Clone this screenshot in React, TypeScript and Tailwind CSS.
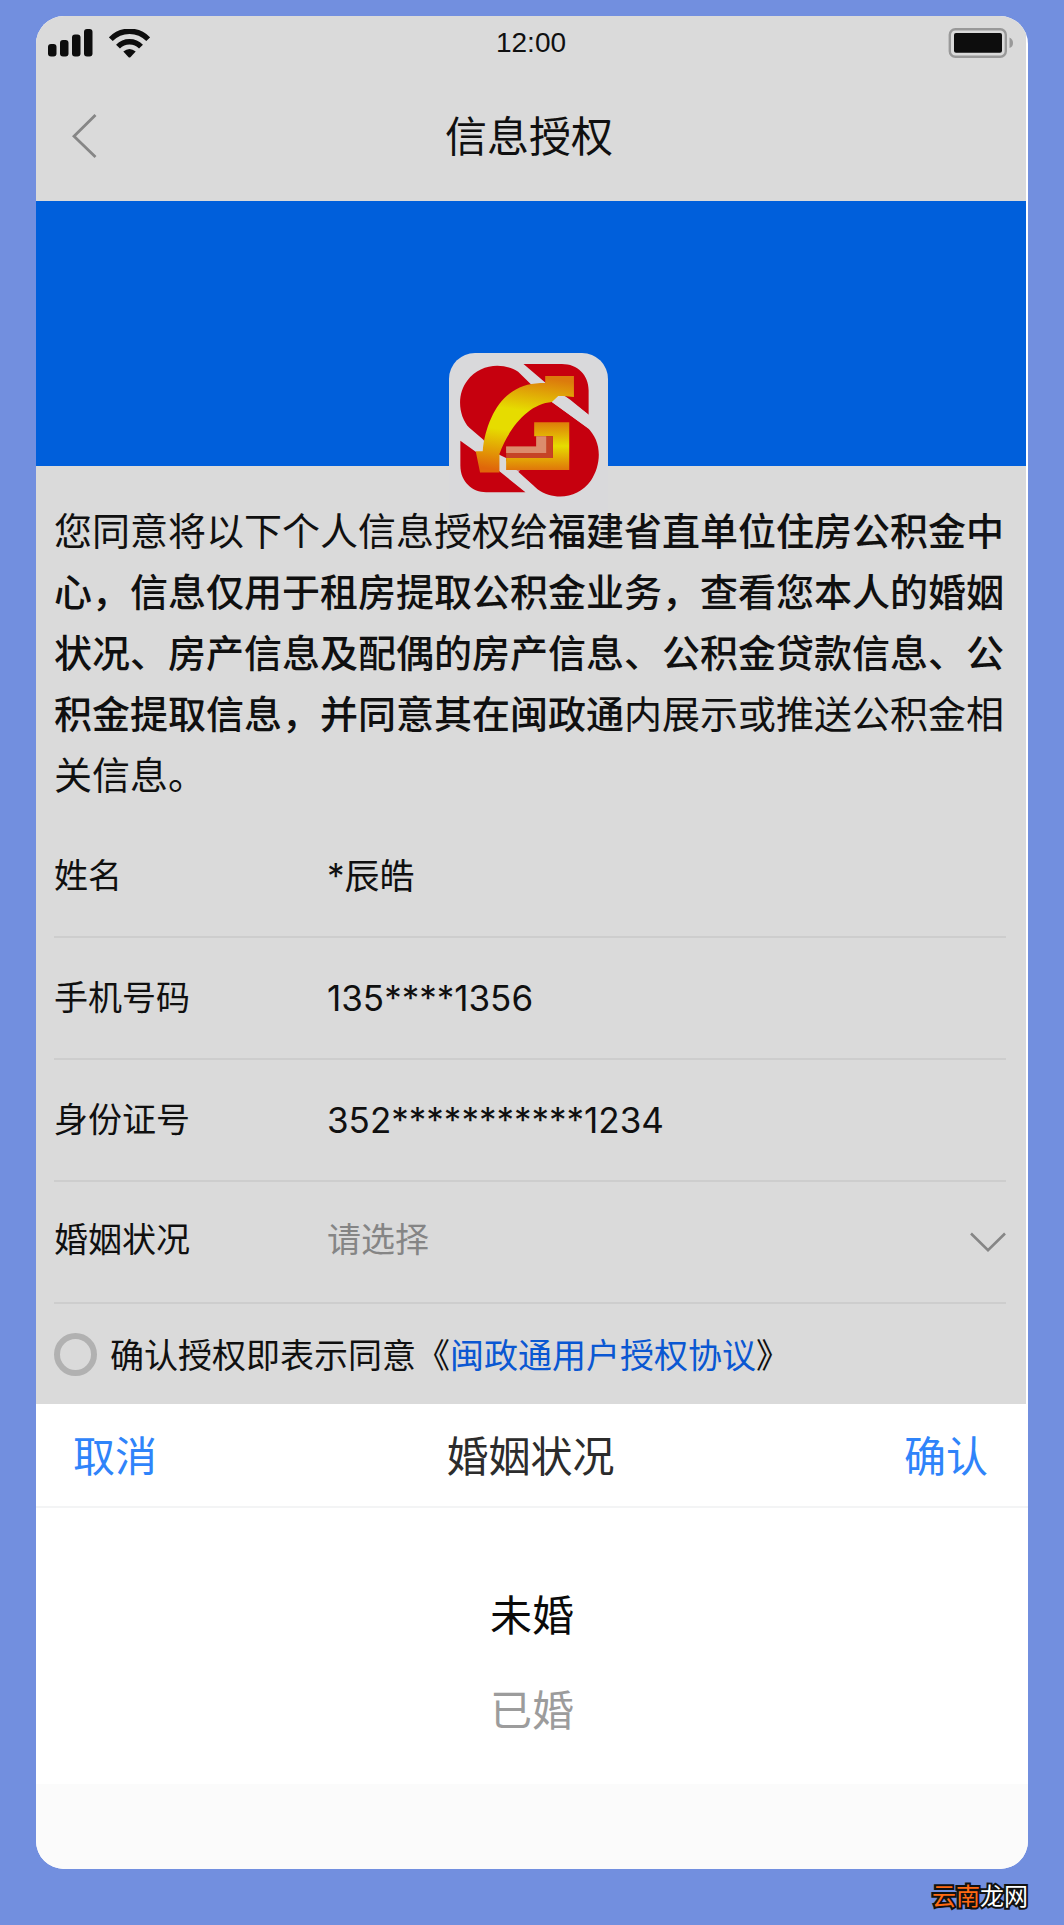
import { useState } from 'react';

interface InfoRow {
  label: string;
  value: string;
}

const rows: InfoRow[] = [
  { label: '姓名', value: '*辰皓' },
  { label: '手机号码', value: '135****1356' },
  { label: '身份证号', value: '352***********1234' },
];

const options = ['未婚', '已婚'];

function SignalIcon() {
  return (
    <svg width="45" height="28" viewBox="0 0 45 28" fill="#0d0d0d" aria-hidden="true">
      <rect x="0" y="15" width="8.5" height="12.5" rx="3" />
      <rect x="12" y="11" width="8.5" height="16.5" rx="3" />
      <rect x="24" y="5.5" width="8.5" height="22" rx="3" />
      <rect x="36" y="0" width="8.5" height="27.5" rx="3" />
    </svg>
  );
}

function WifiIcon() {
  return (
    <svg width="41" height="29" viewBox="0 0 41 29" fill="none" stroke="#0d0d0d" strokeWidth="5.4" aria-hidden="true">
      <path d="M1.8 10.2A26 26 0 0 1 39.2 10.2" />
      <path d="M9 17.6A16 16 0 0 1 32 17.6" />
      <path d="M14.3 22.6Q20.5 17.6 26.7 22.6L21.4 28.2Q20.5 29 19.6 28.2Z" fill="#0d0d0d" stroke="none" />
    </svg>
  );
}

function BatteryIcon() {
  return (
    <svg width="66" height="30" viewBox="0 0 66 30" fill="none" aria-hidden="true">
      <rect x="1.8" y="1.2" width="56" height="27.6" rx="5.5" stroke="#999" strokeWidth="2.4" />
      <rect x="6" y="5" width="48" height="19.8" rx="2" fill="#0d0d0d" />
      <path d="M61.5 9.5Q65 11 65 15T61.5 20Z" fill="#999" />
    </svg>
  );
}

function FundLogo() {
  return (
    <svg className="block w-full" viewBox="57 38 476 476" aria-hidden="true">
      <defs>
        <linearGradient id="arc" gradientUnits="userSpaceOnUse" x1="300" y1="107" x2="260" y2="396">
          <stop offset="0" stopColor="#dc7a0c" />
          <stop offset="0.36" stopColor="#e6dc00" />
          <stop offset="0.58" stopColor="#e6dc00" />
          <stop offset="1" stopColor="#e0660a" />
        </linearGradient>
        <linearGradient id="hook" gradientUnits="userSpaceOnUse" x1="300" y1="245" x2="300" y2="388">
          <stop offset="0" stopColor="#de7c0a" />
          <stop offset="0.5" stopColor="#e6dc00" />
          <stop offset="1" stopColor="#e0760a" />
        </linearGradient>
      </defs>
      <g fill="#c6000e">
        <path d="M160 298L118 262C84 226 80 160 112 120C148 72 216 64 264 94L303 132L345 140L365 185L470 260C514 300 516 366 482 420C444 474 372 482 322 446L208 343L180 330Z" />
        <path d="M280 71H395C442 71 475 104 475 150V223L420 178L345 126Z" />
        <path d="M91 301V375C91 425 128 455 168 455H286L208 392L160 350Z" />
      </g>
      <path d="M370 172Q388 158 408 172L474 222V264L364 184Z" fill="#d9d9db" />
      <path d="M206 342L228 352V388L270 390L240 410L206 388Z" fill="#d9d9db" />
      <path d="M228 388H252L312 438L285 453L228 405Z" fill="#d9d9db" />
      <path d="M345 107H431V170L398 167H384L365 185C296 190 238 260 208 340V396H150L137 332H158C164 260 196 186 246 154C276 134 306 128 345 128Z" fill="url(#arc)" />
      <path d="M312 245H417V388H228V352H368V287H312Z" fill="url(#hook)" />
      <path d="M318 287H368V352H228V318H318Z" fill="#c64426" />
      <path d="M318 287H348V337H228V318H318Z" fill="#dc8c6c" />
    </svg>
  );
}

export default function App() {
  const [status, setStatus] = useState('');
  const [agreed, setAgreed] = useState(false);
  const [picked, setPicked] = useState('未婚');

  return (
    <div className="min-h-screen bg-[#728fdf] px-9 pt-4 font-['Noto_Sans_CJK_SC',sans-serif] text-[#101010]">
      <main className="overflow-hidden rounded-[28px] bg-white">
        <div className="mr-0.5 bg-[#dadada]">
          {/* Status bar */}
          <div className="grid h-[54px] grid-cols-3 items-center px-3">
            <div className="flex items-center gap-4">
              <SignalIcon />
              <WifiIcon />
            </div>
            <span className="text-center font-['Liberation_Sans',sans-serif] text-[28px] leading-none">12:00</span>
            <div className="flex justify-end">
              <BatteryIcon />
            </div>
          </div>

          {/* Title bar */}
          <header className="grid h-[131px] grid-cols-3 items-center pl-9 pr-10">
            <button type="button" aria-label="返回" className="w-fit">
              <svg width="25" height="44" viewBox="0 0 25 44" fill="none" stroke="#868686" strokeWidth="2.8" aria-hidden="true">
                <path d="M23.5 1L2 22.3L23.5 43" />
              </svg>
            </button>
            <h1 className="pb-1 text-center text-[42px] leading-none">信息授权</h1>
          </header>

          <div className="relative h-[265px] bg-[#005fdb]">
            <div className="absolute left-0 right-1.5 top-[152px] mx-auto w-[159px] overflow-hidden rounded-t-[26px] bg-[#d9d9db]">
              <FundLogo />
            </div>
          </div>

          <div className="pl-[18px] pr-5 pt-8">
            <p className="text-[38px] leading-[61px]">
              您同意将以下个人信息授权给
              <strong className="font-medium">
                福建省直单位住房公积金中心，信息仅用于租房提取公积金业务，查看您本人的婚姻状况、房产信息及配偶的房产信息、公积金贷款信息、公积金提取信息，并同意其在闽政通
              </strong>
              内展示或推送公积金相关信息。
            </p>

            <dl className="mt-[13px] text-[34px] leading-[48px]">
              {rows.map((row) => (
                <div key={row.label} className="flex h-[122px] items-center border-b-2 border-[#cdcdcd]">
                  <dt className="w-[273px] pb-1">{row.label}</dt>
                  <dd className="font-[Inter,'Noto_Sans_CJK_SC',sans-serif] text-[35px]">{row.value}</dd>
                </div>
              ))}
            </dl>
            <div className="flex h-[122px] items-center border-b-2 border-[#cdcdcd] text-[34px] leading-[48px]">
              <label htmlFor="marital" className="w-[273px] pb-2">婚姻状况</label>
              <select
                id="marital"
                value={status}
                onChange={(e) => setStatus(e.target.value)}
                className="flex-1 appearance-none bg-transparent pb-2 text-[#858585]"
              >
                <option value="">请选择</option>
                {options.map((option) => (
                  <option key={option} value={option}>{option}</option>
                ))}
              </select>
              <svg width="36" height="20" viewBox="0 0 36 20" fill="none" stroke="#868686" strokeWidth="2.6" aria-hidden="true">
                <path d="M1 1.5L18 18.2L35 1.5" />
              </svg>
            </div>

            <div className="flex h-[100px] items-center gap-[13px] text-[34px] leading-[48px]">
              <input
                id="agree"
                type="checkbox"
                checked={agreed}
                onChange={(e) => setAgreed(e.target.checked)}
                className="size-[43px] appearance-none rounded-full border-6 border-[#b1b1b1] checked:bg-[#005fdb]"
              />
              <label htmlFor="agree">
                确认授权即表示同意《<a href="#agreement" className="text-[#0a57d2]">闽政通用户授权协议</a>》
              </label>
            </div>
          </div>
        </div>

        {/* Picker sheet */}
        <section aria-label="婚姻状况">
          <div className="grid h-[104px] grid-cols-3 items-center border-b-2 border-[#f3f4f5] pb-0.5 pl-[37px] pr-10 text-[42px] leading-none">
            <button type="button" className="justify-self-start text-[#2f84fa]">取消</button>
            <h2 className="text-center text-[#2c2c2c]">婚姻状况</h2>
            <button type="button" onClick={() => setStatus(picked)} className="justify-self-end text-[#2f84fa]">确认</button>
          </div>
          <div className="flex flex-col items-center pb-[29px] pt-[57px]">
            {options.map((option) => (
              <button
                key={option}
                type="button"
                aria-pressed={picked === option}
                onClick={() => setPicked(option)}
                className={`h-[95px] text-[42px] leading-none ${picked === option ? 'text-[#0a0a0a]' : 'text-[#9c9c9c]'}`}
              >
                {option}
              </button>
            ))}
          </div>
          <div className="h-[85px] bg-[#fbfbfb]" />
        </section>
      </main>

      <footer className="flex h-14 items-center justify-end pb-1 text-2xl text-white [-webkit-text-stroke:4px_#111] [paint-order:stroke_fill]">
        <span className="text-[#ff6a13]">云南</span>龙网
      </footer>
    </div>
  );
}
